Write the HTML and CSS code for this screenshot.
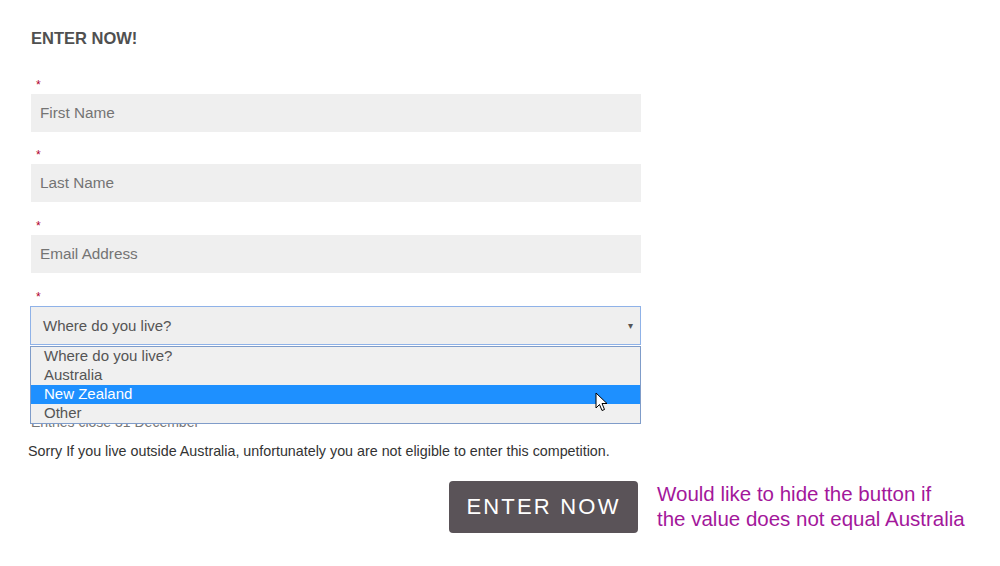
FILE: index.html
```html
<!DOCTYPE html>
<html>
<head>
<meta charset="utf-8">
<link rel="stylesheet" href="styles.css">
</head>
<body>
<div class="page">
  <h2 class="title">ENTER NOW!</h2>
  <form class="form">
    <div class="field">
      <div class="req">*</div>
      <div class="input">First Name</div>
    </div>
    <div class="field">
      <div class="req">*</div>
      <div class="input">Last Name</div>
    </div>
    <div class="field">
      <div class="req">*</div>
      <div class="input">Email Address</div>
    </div>
    <div class="field select-field">
      <div class="req">*</div>
      <div class="select">
        <span>Where do you live?</span>
        <span class="arrow">&#9662;</span>
      </div>
      <ul class="dropdown">
        <li>Where do you live?</li>
        <li>Australia</li>
        <li class="active">New Zealand</li>
        <li>Other</li>
        <svg class="cursor" width="14" height="22" viewBox="0 0 14 22">
          <path d="M1 1 L1 16 L4.5 12.5 L7 18.5 L9.5 17.5 L7 11.5 L12 11.5 Z" fill="#fff" stroke="#000" stroke-width="1" stroke-linejoin="round"/>
        </svg>
      </ul>
    </div>
    <div class="peek"><p>Entries close 31 December</p></div>
    <p class="sorry">Sorry If you live outside Australia, unfortunately you are not eligible to enter this competition.</p>
    <div class="actions">
      <div class="btn-wrap"><button type="button" class="btn">ENTER NOW</button></div>
      <div class="note">Would like to hide the button if<br>the value does not equal Australia</div>
    </div>
  </form>
</div>
</body>
</html>
```
FILE: styles.css
```css
html, body {
  margin: 0;
  padding: 0;
  background: #fff;
  font-family: "Liberation Sans", Arial, sans-serif;
}
.page {
  padding: 28px 0 0 31px;
}
.title {
  margin: 0;
  font-size: 16.5px;
  line-height: 20px;
  font-weight: bold;
  color: #505050;
}
.form {
  margin-top: 28px;
  width: 610px;
}
.field {
  margin-bottom: 15px;
}
.field:first-child {
  margin-bottom: 14px;
}
.req {
  height: 18px;
  font-size: 12px;
  line-height: 18px;
  color: #b0002a;
  padding-left: 5px;
  box-sizing: border-box;
}
.input {
  height: 38px;
  background: #efefef;
  color: #747474;
  font-size: 15.3px;
  line-height: 38px;
  padding-left: 9px;
}
.select-field {
  position: relative;
  margin-bottom: 0;
}
.select {
  height: 39px;
  box-sizing: border-box;
  border: 1px solid #8fb2e8;
  background: #efefef;
  color: #555;
  font-size: 15px;
  display: flex;
  align-items: center;
  justify-content: space-between;
  padding: 0 7px 0 12px;
  margin-left: -1px;
}
.arrow {
  font-size: 10px;
  color: #555;
}
.dropdown {
  position: absolute;
  left: -1px;
  top: 58px;
  width: 611px;
  box-sizing: border-box;
  margin: 0;
  padding: 0;
  list-style: none;
  border: 1px solid #7f9cc9;
  background: #f0f0f0;
  z-index: 2;
}
.dropdown li {
  height: 19px;
  line-height: 18px;
  font-size: 15px;
  color: #555;
  padding-left: 13px;
}
.dropdown li.active {
  background: #1e90ff;
  color: #fff;
}
.cursor {
  position: absolute;
  left: 564px;
  top: 45px;
}
.peek {
  margin-top: 79px;
  height: 3px;
  overflow: hidden;
}
.peek p {
  margin: -11px 0 0 0;
  font-size: 14px;
  line-height: 18px;
  color: #777;
}
.sorry {
  margin: 15px 0 0 -3px;
  font-size: 14.3px;
  line-height: 18px;
  color: #333;
}
.actions {
  display: flex;
  align-items: flex-start;
  margin-top: 21px;
  width: 960px;
}
.btn-wrap {
  width: 607px;
  display: flex;
  justify-content: flex-end;
  flex-shrink: 0;
}
.btn {
  width: 189px;
  height: 52px;
  background: #5a5358;
  color: #fff;
  border: none;
  border-radius: 4px;
  font-family: "Liberation Sans", Arial, sans-serif;
  font-size: 22px;
  letter-spacing: 2.2px;
  padding: 0;
}
.note {
  margin-left: 19px;
  color: #a3179b;
  font-size: 20.5px;
  line-height: 25px;
}
```
